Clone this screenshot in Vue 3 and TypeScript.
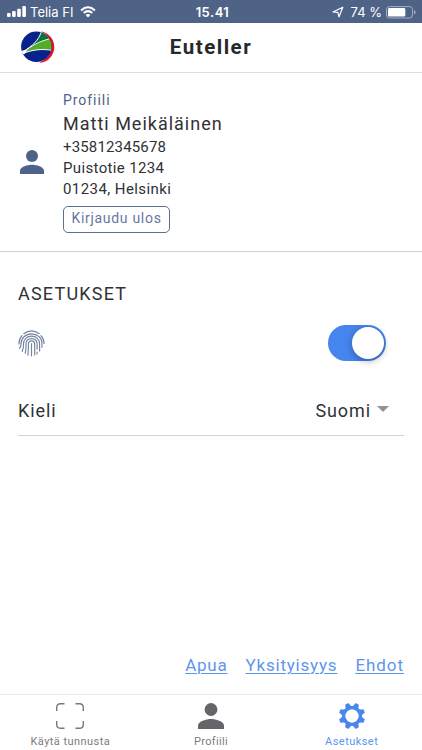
<script setup lang="ts">
import { ref } from 'vue'

const biometrics = ref(true)
const language = ref('Suomi')
const teeth: number[] = Array.from({ length: 8 }, (_, i) => i * 45 + 22.5)
</script>

<template>
  <div class="screen">
    <div class="status">
      <div class="carrier">
        <svg width="20" height="12" viewBox="0 0 20 12" fill="#fff">
          <rect x="0" y="7" width="3.6" height="4" rx="1" /><rect x="5.1" y="5" width="3.6" height="6" rx="1" />
          <rect x="10.2" y="2.8" width="3.6" height="8.2" rx="1" /><rect x="15.3" y="0" width="3.6" height="11" rx="1" />
        </svg>
        <span class="operator">Telia FI</span>
        <svg class="wifi" width="16" height="12" viewBox="0 0 16 12" fill="none" stroke="#fff" stroke-width="2">
          <path d="M1 4.4Q8-1.8 15 4.4M3.6 7.1Q8 3.2 12.4 7.1" /><path d="M8 11.4 5.6 8.9Q8 7 10.4 8.9Z" fill="#fff" stroke="none" />
        </svg>
      </div>
      <span class="clock">15.41</span>
      <div class="power">
        <svg width="12" height="12" viewBox="0 0 12 12" fill="none" stroke="#fff" stroke-width="1.2" stroke-linejoin="round">
          <path d="M10.8 1.2 1 6 5.8 6.4 7 10.8Z" />
        </svg>
        <span class="percent">74 %</span>
        <svg width="30" height="13" viewBox="0 0 30 13">
          <rect x=".5" y=".6" width="26" height="11.4" rx="3" fill="none" stroke="#a5b0c7" />
          <rect x="2" y="2.1" width="17.3" height="8.4" rx="1.3" fill="#fff" />
          <path d="M28 4.2q1.6.6 1.6 2.1T28 8.4z" fill="#a5b0c7" />
        </svg>
      </div>
    </div>

    <header class="header">
      <svg class="logo" width="36" height="34" viewBox="0 0 36 34">
        <defs><clipPath id="globe"><circle cx="16.3" cy="16.8" r="15.2" /></clipPath></defs>
        <path d="M20.5 1.2A16 16 0 0 1 21 32.8L19.5 32.2A16.4 16.4 0 0 0 20.5 1.2Z" fill="#e2102c" />
        <g clip-path="url(#globe)">
          <rect width="36" height="34" fill="#08228b" />
          <path d="M4 21.5C13 16 19 10 21.5 2L32 2 29 9C20 11.5 12 16 4 21.5Z" fill="#08733a" />
          <path d="M4 22C12 16 20 11.5 29 9L34 9V20C22 18.5 14 20 4 23Z" fill="#55ad27" />
          <path d="M3 21.5C13 16 18.5 10 21.3 2M3 22.5C11 16 19 11.5 29 9M3 23.5C13 19.5 22 18.6 33 20.5" fill="none" stroke="#fff" stroke-width="1" />
          <path d="M0 20.8 7.5 20.2 4.5 24 0 25Z" fill="#fff" />
        </g>
      </svg>
      <h1 class="title">Euteller</h1>
    </header>

    <section class="profile">
      <svg class="avatar" width="24" height="24" viewBox="0 0 24 24" fill="#4e6389">
        <circle cx="12" cy="6" r="6" /><path d="M0 24V20.8C0 16.8 7.8 14.8 12 14.8S24 16.8 24 20.8V24Z" />
      </svg>
      <div class="details">
        <div class="label">Profiili</div>
        <div class="name">Matti Meikäläinen</div>
        <div class="phone">+35812345678</div>
        <div class="street">Puistotie 1234</div>
        <div class="city">01234, Helsinki</div>
        <button class="logout" type="button"><span>Kirjaudu ulos</span></button>
      </div>
    </section>

    <main class="settings">
      <h2 class="heading">ASETUKSET</h2>
      <div class="biometric">
        <svg width="27" height="27" viewBox="0 0 28 28" fill="none" stroke="#75839f" stroke-width="1.2" stroke-linecap="round">
          <path d="M6 3.9Q14-1.9 22 3.9M1 14.5Q.8 9.4 4.2 5.8M23.8 5.8Q27 9.3 27 14M1.6 19Q3.1 17.5 3.1 14.5C3.1 8.5 7.8 4 14 4S24.9 8.5 24.9 14V18" />
          <path d="M4.4 22.2Q5.8 19 5.7 14.5C5.7 9.7 9.2 6.4 14 6.4S22.4 9.7 22.4 14.5V21.8M7.5 24.2Q8.4 20 8.3 14.6C8.3 11.1 10.5 8.9 14 8.9S19.8 11.1 19.8 14.8V20" />
          <path d="M10.3 26Q10.9 20 10.8 14.8C10.8 12.5 12 11.3 14 11.3S17.3 12.5 17.3 15V26M14 14V26.8M19.8 23V24.8" />
        </svg>
        <button class="toggle" :class="{ on: biometrics }" type="button" role="switch" :aria-checked="biometrics" @click="biometrics = !biometrics">
          <span class="knob"></span>
        </button>
      </div>
      <div class="language">
        <span class="key">Kieli</span>
        <span class="choice"><span class="value">{{ language }}</span><i class="caret"></i></span>
      </div>
    </main>

    <nav class="links">
      <a class="help" href="#">Apua</a>
      <a class="privacy" href="#">Yksityisyys</a>
      <a class="terms" href="#">Ehdot</a>
    </nav>

    <footer class="tabs">
      <div class="tab">
        <svg width="28" height="26" viewBox="0 0 28 26" fill="none" stroke="#77787b" stroke-width="1.4">
          <path d="M.7 8V4.5Q.7.7 4.5.7H8.5M19.5.7H23.5Q27.3.7 27.3 4.5V8M27.3 18V21.5Q27.3 25.3 23.5 25.3H19.5M8.5 25.3H4.5Q.7 25.3.7 21.5V18" />
        </svg>
        <span class="tab-use">Käytä tunnusta</span>
      </div>
      <div class="tab">
        <svg width="26" height="26" viewBox="0 0 26 26" fill="#65666a">
          <circle cx="13" cy="6.5" r="6.4" /><path d="M0 26V22.5C0 18.2 8.5 16 13 16S26 18.2 26 22.5V26Z" />
        </svg>
        <span class="tab-profile">Profiili</span>
      </div>
      <div class="tab active">
        <svg width="26" height="26" viewBox="-13 -13 26 26" fill="#4a87ec">
          <path v-for="angle in teeth" :key="angle" :transform="`rotate(${angle})`" d="M-4.4-8Q-2.4-9.6-2.2-12.2Q-2.1-13.2-1.2-13.2H1.2Q2.1-13.2 2.2-12.2Q2.4-9.6 4.4-8Z" />
          <circle r="8.2" fill="none" stroke="#4a87ec" stroke-width="3.4" />
          <circle r="6.5" fill="#fff" />
        </svg>
        <span class="tab-settings">Asetukset</span>
      </div>
    </footer>
  </div>
</template>

<style>
body { background: #fff; }
</style>

<style scoped>
* { box-sizing: border-box; }
.screen { display: flex; flex-direction: column; width: 422px; height: 750px; overflow: hidden; background: #fff; color: #303135; font-family: Roboto, sans-serif; white-space: nowrap; }
svg { display: block; flex: none; }
.status { display: grid; grid-template-columns: 1fr auto 1fr; align-items: center; height: 23px; padding: 1px 6px 0 7px; background: #4e6386; color: #fff; font: 13px/22px Inter, sans-serif; }
.carrier, .power { display: flex; align-items: center; }
.operator { margin-left: 3px; letter-spacing: 0; }
.wifi { margin-left: 7px; }
.clock { position: relative; left: 1px; font-weight: 600; letter-spacing: .5px; }
.power { justify-content: flex-end; }
.percent { margin: 0 4px 0 7px; }
.header { display: grid; grid-template-columns: 1fr auto 1fr; align-items: center; height: 50px; padding-bottom: 1px; border-bottom: 1px solid #dedfe1; }
.logo { margin-left: 20px; }
.title { margin: 0; font-size: 20.5px; line-height: 28px; font-weight: 700; letter-spacing: 1.5px; color: #26282c; }
.profile { display: flex; align-items: center; height: 179px; padding-left: 20px; border-bottom: 1px solid #cfd0d2; }
.details { display: flex; flex-direction: column; align-items: flex-start; margin-left: 19px; font-size: 15px; line-height: 21px; padding-bottom: 1px; }
.label { color: #4e6389; font-size: 14px; letter-spacing: .95px; }
.name { font-size: 18px; line-height: 26px; letter-spacing: 1px; }
.phone { letter-spacing: .15px; }
.street { letter-spacing: .35px; }
.city { letter-spacing: .42px; }
.logout { display: flex; align-items: center; justify-content: center; width: 107px; height: 27px; margin-top: 6px; padding: 0 0 3px; border: 1.5px solid #5c7096; border-radius: 5px; background: #fff; color: #6678a0; font: 14px/20px Roboto, sans-serif; letter-spacing: .7px; }
.settings { padding: 29px 18px 0; }
.heading { margin: 0; font-size: 18px; line-height: 26px; font-weight: 400; letter-spacing: 1.2px; }
.biometric { display: flex; justify-content: space-between; align-items: center; height: 36px; margin-top: 18px; padding-right: 18px; }
.toggle { display: flex; align-items: center; width: 58px; height: 36px; padding: 2px; border: 0; border-radius: 18px; background: #b8bcc5; }
.toggle.on { justify-content: flex-end; background: #4685ed; }
.knob { width: 32px; height: 32px; border-radius: 50%; background: #fff; box-shadow: 0 2px 7px rgba(0, 0, 0, .3); }
.language { display: flex; align-items: center; justify-content: space-between; height: 50px; margin-top: 25px; padding-right: 15px; border-bottom: 1px solid #d3d4d6; font-size: 18px; letter-spacing: .9px; }
.choice { display: flex; align-items: center; gap: 6px; }
.caret { width: 0; height: 0; border: 6px solid transparent; border-top-color: #929395; border-bottom: 0; margin-bottom: 3px; }
.links { display: flex; justify-content: flex-end; gap: 18px; margin: auto 18px 16px; font-size: 17px; line-height: 25px; letter-spacing: .75px; }
.privacy { letter-spacing: .8px; }
.terms { letter-spacing: .95px; }
.links a { color: #5e96ed; text-underline-offset: 2px; text-decoration-thickness: 1px; }
.tabs { display: grid; grid-template-columns: repeat(3, 1fr); height: 56px; border-top: 1px solid #e8e8e9; }
.tab { display: flex; flex-direction: column; align-items: center; padding-top: 8px; color: #7b7c7f; font-size: 11px; line-height: 14px; letter-spacing: .45px; gap: 6px; }
.tab.active { color: #5e96ed; }
.tab-profile { letter-spacing: .35px; }
</style>
